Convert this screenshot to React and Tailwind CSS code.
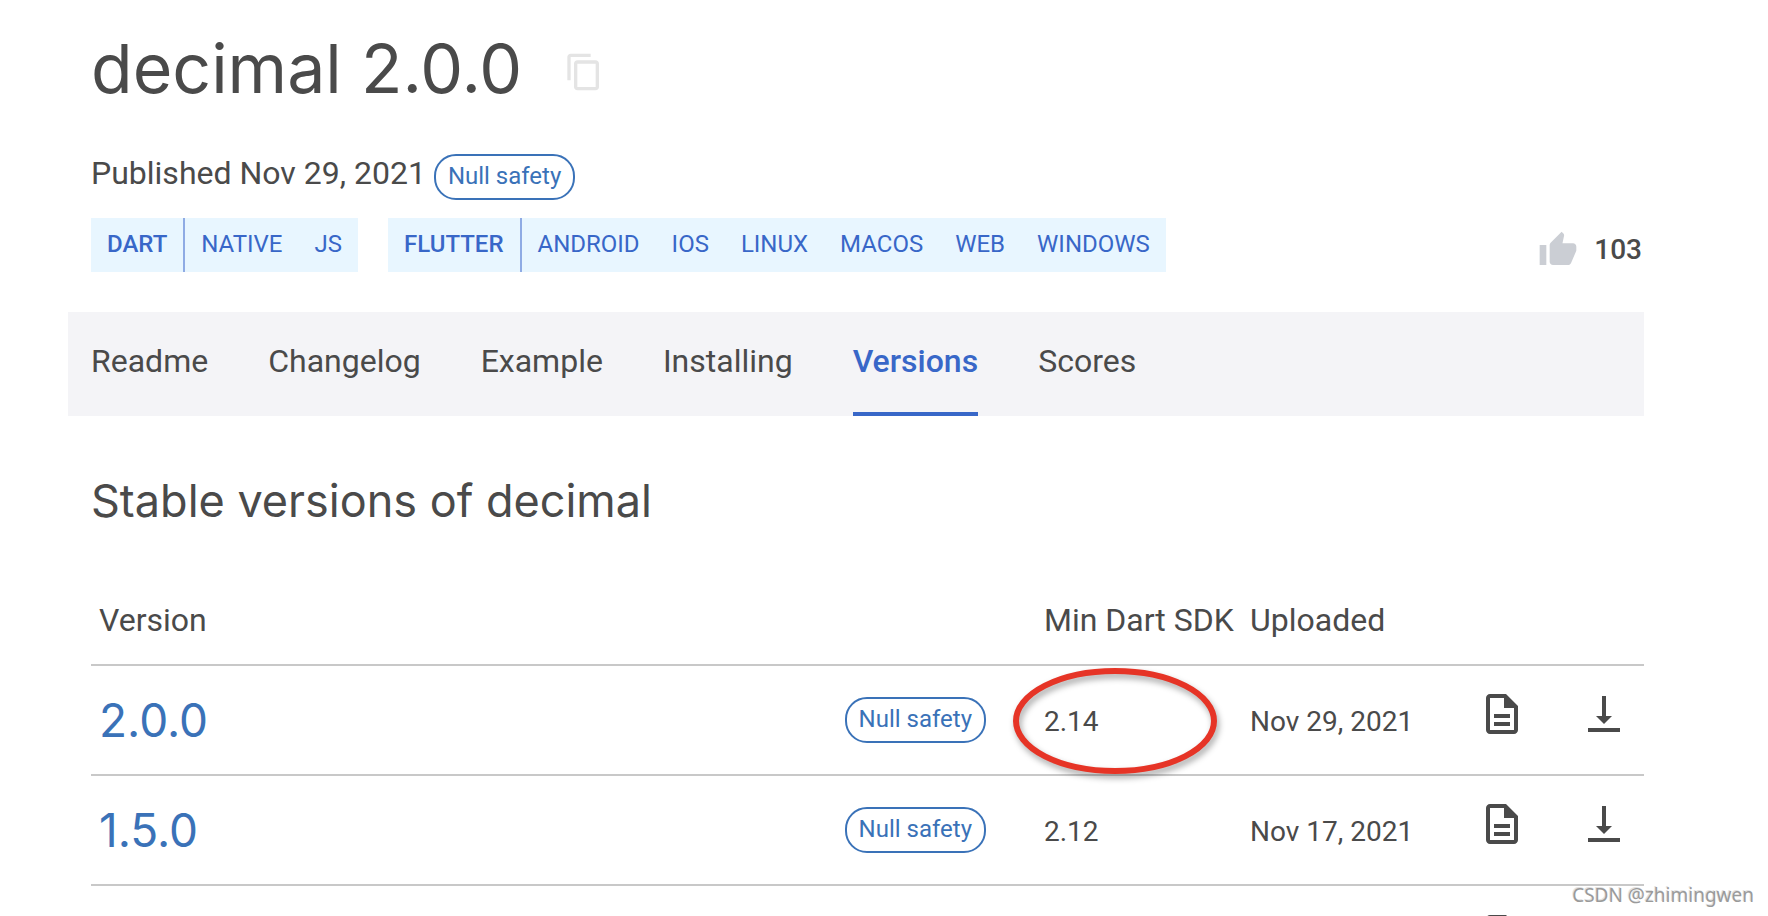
import React from 'react';

const dartTags = ['NATIVE', 'JS'];
const flutterTags = ['ANDROID', 'IOS', 'LINUX', 'MACOS', 'WEB', 'WINDOWS'];
const tabs = ['Readme', 'Changelog', 'Example', 'Installing', 'Versions', 'Scores'];

const versions = [
  { version: '2.0.0', sdk: '2.14', uploaded: 'Nov 29, 2021', marked: true },
  { version: '1.5.0', sdk: '2.12', uploaded: 'Nov 17, 2021' },
];

const CopyIcon = () => (
  <svg viewBox="0 0 24 24" className="size-10" fill="currentColor">
    <path d="M16 1H4c-1.1 0-2 .9-2 2v14h2V3h12V1zm3 4H8c-1.1 0-2 .9-2 2v14c0 1.1.9 2 2 2h11c1.1 0 2-.9 2-2V7c0-1.1-.9-2-2-2zm0 16H8V7h11v14z" />
  </svg>
);

const ThumbIcon = () => (
  <svg viewBox="0 0 24 24" className="size-10" fill="currentColor">
    <path d="M1 21h4V9H1v12zm22-11c0-1.100-.9-2-2-2h-6.310l.950-4.570.03-.32c0-.41-.17-.79-.44-1.060L14.170 1 7.590 7.590C7.220 7.950 7 8.450 7 9v10c0 1.100.9 2 2 2h9c.83 0 1.540-.5 1.840-1.220l3.020-7.050c.09-.23.14-.47.14-.73v-2z" />
  </svg>
);

const DocIcon = () => (
  <svg viewBox="0 0 24 24" className="size-12" fill="currentColor">
    <path
      fillRule="evenodd"
      d="M6 2c-1.100 0-2 .9-2 2v16c0 1.100.9 2 2 2h12c1.100 0 2-.9 2-2V8l-6-6H6zm0 2h7v5h5v11H6V4z"
    />
    <path d="M8 12h8v2H8zM8 16h8v2H8z" />
  </svg>
);

const DownloadIcon = () => (
  <svg viewBox="0 0 24 24" className="size-12" fill="currentColor">
    <path d="M11 3h2v10h3l-4 4-4-4h3V3zM4 19h16v2H4z" />
  </svg>
);

const NullSafety = () => (
  <a
    href="#null-safety"
    className="inline-block rounded-[22px] border-2 border-[#3a72b8] px-3 pt-[5px] pb-[7px] text-2xl leading-[30px] whitespace-nowrap text-[#3a72b8]"
  >
    Null safety
  </a>
);

const TagGroup = ({ name, tags }) => (
  <div className="flex bg-[#e8f6ff] text-2xl leading-[52px] text-[#3867c8]">
    <a href={`#${name}`} className="border-r-2 border-[#8fabe4] px-4 pb-[2px] font-medium">
      {name}
    </a>
    {tags.map((tag) => (
      <a key={tag} href={`#${tag}`} className="px-4 pb-[2px]">
        {tag}
      </a>
    ))}
  </div>
);

const App = () => {
  return (
    <div className="relative h-screen overflow-hidden bg-white pr-[124px] pl-[68px] font-[Roboto,sans-serif] text-[#4a4a4a]">
      {/* Package header */}
      <header className="pt-6 pr-[2px] pl-[23px]">
        <div className="flex items-center gap-[42px]">
          <h1 className="font-[Inter,sans-serif] text-[68px] leading-[88px]">decimal 2.0.0</h1>
          <button type="button" aria-label="Copy" className="pt-2 text-[#e4e4e4]">
            <CopyIcon />
          </button>
        </div>

        <div className="mt-[42px] flex items-start gap-2">
          <p className="text-[32px] leading-[38px]">Published Nov 29, 2021</p>
          <NullSafety />
        </div>

        <div className="mt-[18px] flex items-start justify-between">
          <div className="flex gap-[30px]">
            <TagGroup name="DART" tags={dartTags} />
            <TagGroup name="FLUTTER" tags={flutterTags} />
          </div>
          <div className="flex items-center gap-4 pt-3">
            <button type="button" aria-label="Like" className="text-[#cbced4]">
              <ThumbIcon />
            </button>
            <span className="text-[28px] leading-[40px] font-medium">103</span>
          </div>
        </div>
      </header>

      {/* Tabs */}
      <nav className="mt-10 flex gap-[60px] bg-[#f4f4f7] pl-[23px] text-[32px] leading-[98px]">
        {tabs.map((tab) => (
          <a
            key={tab}
            href={`#${tab}`}
            className={
              tab === 'Versions'
                ? 'border-b-4 border-[#3867c8] pb-[2px] font-medium text-[#3867c8]'
                : 'border-b-4 border-transparent pb-[2px]'
            }
          >
            {tab}
          </a>
        ))}
      </nav>

      {/* Version list */}
      <main className="pt-[55px] pl-[23px]">
        <h2 className="font-[Inter,sans-serif] text-[45px] leading-[60px]">Stable versions of decimal</h2>
        <table className="mt-12 w-full table-fixed border-collapse text-left text-[28px]">
          <thead>
            <tr className="h-[86px] border-b-2 border-[#c8c8c8] text-[32px]">
              <th className="px-2 pb-1 font-normal">Version</th>
              <th className="w-[200px]" aria-label="Badges" />
              <th className="w-[206px] px-2 pb-1 font-normal whitespace-nowrap">Min Dart SDK</th>
              <th className="w-[198px] px-2 pb-1 font-normal">Uploaded</th>
              <th className="w-[102px]" aria-label="Documentation" />
              <th className="w-[102px]" aria-label="Archive" />
            </tr>
          </thead>
          <tbody>
            {versions.map((row) => (
              <tr key={row.version} className="h-[110px] border-b-2 border-[#c8c8c8]">
                <td className="px-2 font-[Inter,sans-serif] text-[46px] leading-[60px]">
                  <a href={`#${row.version}`} className="text-[#3a72b8]">
                    {row.version}
                  </a>
                </td>
                <td className="pr-[50px] text-right">
                  <NullSafety />
                </td>
                <td className="relative px-2 pt-1">
                  {row.sdk}
                  {row.marked && (
                    <svg
                      viewBox="0 0 206 108"
                      className="absolute top-px -left-6 w-[206px] drop-shadow-[2px_4px_3px_rgba(0,0,0,0.35)]"
                      fill="none"
                    >
                      <ellipse cx="103" cy="54" rx="99" ry="50" stroke="#e63426" strokeWidth="6" />
                    </svg>
                  )}
                </td>
                <td className="px-2 pt-1 whitespace-nowrap">{row.uploaded}</td>
                <td className="pr-4 pb-3">
                  <a href="#documentation" aria-label="Documentation" className="flex justify-end">
                    <DocIcon />
                  </a>
                </td>
                <td className="pr-4 pb-3">
                  <a href="#archive" aria-label="Download" className="flex justify-end">
                    <DownloadIcon />
                  </a>
                </td>
              </tr>
            ))}
            <tr className="h-[110px]">
              <td colSpan={4} />
              <td className="pr-4 pb-3">
                <a href="#documentation" aria-label="Documentation" className="flex justify-end">
                  <DocIcon />
                </a>
              </td>
              <td />
            </tr>
          </tbody>
        </table>
      </main>

      <span className="absolute right-[14px] bottom-[5px] font-['Noto_Sans',sans-serif] text-[19px] leading-[32px] text-[#9a9a9a] [text-shadow:-1px_-1px_0_#e2e2e2]">
        CSDN @zhimingwen
      </span>
    </div>
  );
};

export default App;
